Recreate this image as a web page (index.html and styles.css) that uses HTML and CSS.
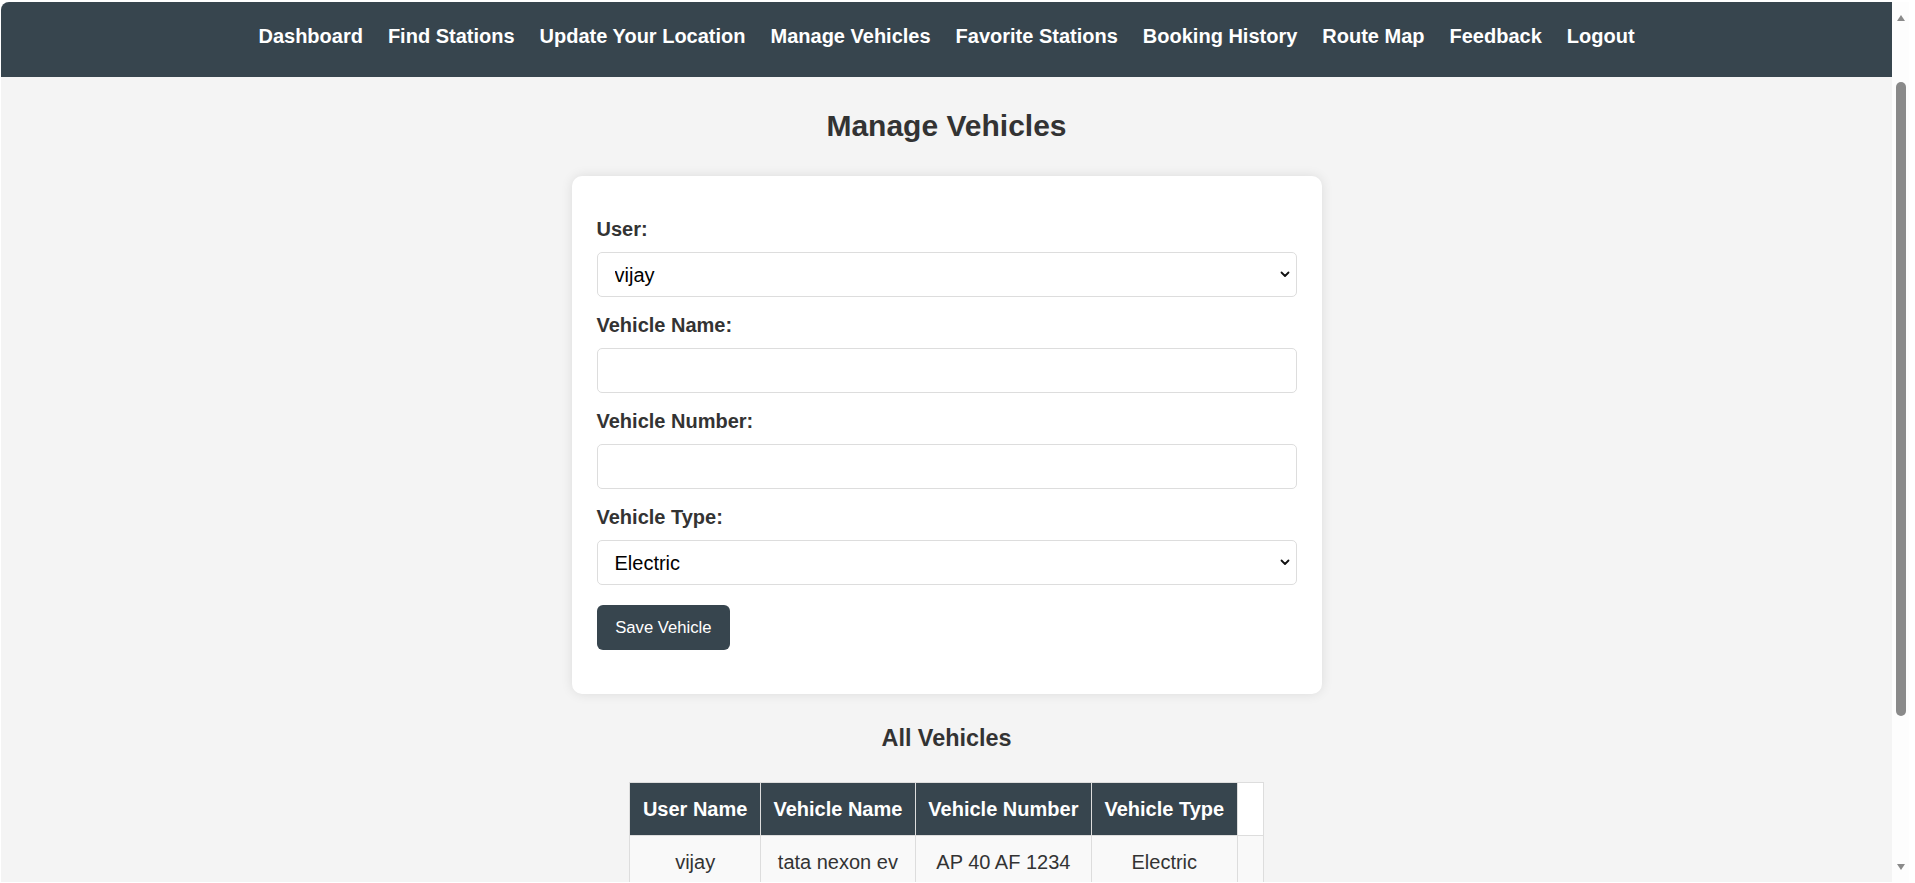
FILE: index.html
```html
<!DOCTYPE html>
<html lang="en">
<head>
<meta charset="utf-8">
<title>Manage Vehicles</title>
<link rel="stylesheet" href="styles.css">
</head>
<body>
<div class="window">
  <div class="viewport">
    <nav class="navbar">
      <a href="#" class="nav-link">Dashboard</a>
      <a href="#" class="nav-link">Find Stations</a>
      <a href="#" class="nav-link">Update Your Location</a>
      <a href="#" class="nav-link">Manage Vehicles</a>
      <a href="#" class="nav-link">Favorite Stations</a>
      <a href="#" class="nav-link">Booking History</a>
      <a href="#" class="nav-link">Route Map</a>
      <a href="#" class="nav-link">Feedback</a>
      <a href="#" class="nav-link">Logout</a>
    </nav>
    <main class="content">
      <h2 class="page-title">Manage Vehicles</h2>
      <form class="card">
        <div class="field">
          <label class="field-label">User:</label>
          <div class="select-wrap">
            <select class="control control-select"><option>vijay</option></select>
            <svg class="chevron" width="10" height="7" viewBox="0 0 10 7"><polyline points="1.5,1.5 5,5 8.5,1.5" fill="none" stroke="#111" stroke-width="1.8" stroke-linecap="round" stroke-linejoin="round"/></svg>
          </div>
        </div>
        <div class="field">
          <label class="field-label">Vehicle Name:</label>
          <input class="control" type="text">
        </div>
        <div class="field">
          <label class="field-label">Vehicle Number:</label>
          <input class="control" type="text">
        </div>
        <div class="field field-last">
          <label class="field-label">Vehicle Type:</label>
          <div class="select-wrap">
            <select class="control control-select"><option>Electric</option></select>
            <svg class="chevron" width="10" height="7" viewBox="0 0 10 7"><polyline points="1.5,1.5 5,5 8.5,1.5" fill="none" stroke="#111" stroke-width="1.8" stroke-linecap="round" stroke-linejoin="round"/></svg>
          </div>
        </div>
        <button type="button" class="btn-save">Save Vehicle</button>
      </form>
      <h3 class="section-title">All Vehicles</h3>
      <table class="vehicle-table">
        <thead>
          <tr>
            <th>User Name</th>
            <th>Vehicle Name</th>
            <th>Vehicle Number</th>
            <th>Vehicle Type</th>
            <th class="th-empty"></th>
          </tr>
        </thead>
        <tbody>
          <tr>
            <td>vijay</td>
            <td>tata nexon ev</td>
            <td>AP 40 AF 1234</td>
            <td>Electric</td>
            <td></td>
          </tr>
        </tbody>
      </table>
    </main>
  </div>
  <div class="scrollbar">
    <span class="sb-up"></span>
    <span class="sb-thumb"></span>
    <span class="sb-spacer"></span>
    <span class="sb-down"></span>
  </div>
</div>
</body>
</html>
```
FILE: styles.css
```css
html, body {
  margin: 0;
  height: 100%;
  overflow: hidden;
  background: #ffffff;
}

body {
  box-sizing: border-box;
  padding: 2px 0 1px 1px;
  font-family: "Liberation Sans", Arial, sans-serif;
  color: #333333;
}

.window {
  display: flex;
  height: 100%;
}

.viewport {
  width: 1891px;
  flex: none;
  height: 100%;
  background: #f4f4f4;
  border-top-left-radius: 8px;
  overflow: hidden;
}

/* Navbar */
.navbar {
  display: flex;
  justify-content: center;
  gap: 25px;
  background: #37454e;
  padding: 23px 0 29px;
}

.nav-link {
  color: #ffffff;
  text-decoration: none;
  font-weight: bold;
  font-size: 20px;
  line-height: 23px;
}

/* Content */
.content {
  display: flex;
  flex-direction: column;
  align-items: center;
}

.page-title {
  margin: 32px 0 0;
  font-size: 30px;
  line-height: 34.5px;
  font-weight: bold;
  color: #333333;
}

.card {
  width: 750px;
  box-sizing: border-box;
  margin-top: 32.5px;
  padding: 42px 25px 44px;
  background: #ffffff;
  border-radius: 10px;
  box-shadow: 0 0 12px rgba(0, 0, 0, 0.1);
}

.field {
  margin-bottom: 17px;
}

.field-last {
  margin-bottom: 20px;
}

.field-label {
  display: block;
  font-size: 20px;
  line-height: 23px;
  font-weight: bold;
  color: #333333;
  margin-bottom: 11px;
}

.control {
  display: block;
  width: 100%;
  height: 45px;
  box-sizing: border-box;
  margin: 0;
  padding: 0 17px;
  border: 1px solid #dddddd;
  border-radius: 5px;
  background: #ffffff;
  font-family: "Liberation Sans", Arial, sans-serif;
  font-size: 20px;
  color: #000000;
  outline: none;
}

.control-select {
  -webkit-appearance: none;
  appearance: none;
}

.select-wrap {
  position: relative;
}

.chevron {
  position: absolute;
  right: 7px;
  top: 19px;
}

.btn-save {
  display: block;
  height: 45px;
  padding: 0 18.75px;
  border: none;
  border-radius: 6px;
  background: #37454e;
  color: #ffffff;
  font-family: "Liberation Sans", Arial, sans-serif;
  font-size: 16.67px;
}

.section-title {
  margin: 31px 0 0;
  font-size: 23.4px;
  line-height: 27px;
  font-weight: bold;
  color: #333333;
}

/* Table */
.vehicle-table {
  margin-top: 30px;
  border-collapse: collapse;
  background: #ffffff;
  font-size: 20px;
  line-height: 23px;
}

.vehicle-table th,
.vehicle-table td {
  border: 1px solid #dddddd;
  padding: 14.5px 12.5px;
  text-align: center;
}

.vehicle-table th {
  background: #37454e;
  color: #ffffff;
  font-weight: bold;
}

.vehicle-table th.th-empty {
  background: #ffffff;
}

.vehicle-table td {
  background: #f9f9f9;
  color: #333333;
  font-weight: normal;
}

/* Fake scrollbar */
.scrollbar {
  width: 17px;
  flex: none;
  display: flex;
  flex-direction: column;
  align-items: center;
  padding-top: 13px;
  padding-bottom: 12px;
  box-sizing: border-box;
  background: #fdfdfd;
}

.sb-up {
  width: 0;
  height: 0;
  border-left: 4.5px solid transparent;
  border-right: 4.5px solid transparent;
  border-bottom: 6px solid #8a8a8a;
}

.sb-thumb {
  width: 10px;
  height: 634px;
  margin-top: 61px;
  border-radius: 5px;
  background: #8a8a8a;
}

.sb-spacer {
  flex: 1;
}

.sb-down {
  width: 0;
  height: 0;
  border-left: 4.5px solid transparent;
  border-right: 4.5px solid transparent;
  border-top: 6px solid #8a8a8a;
}
```
